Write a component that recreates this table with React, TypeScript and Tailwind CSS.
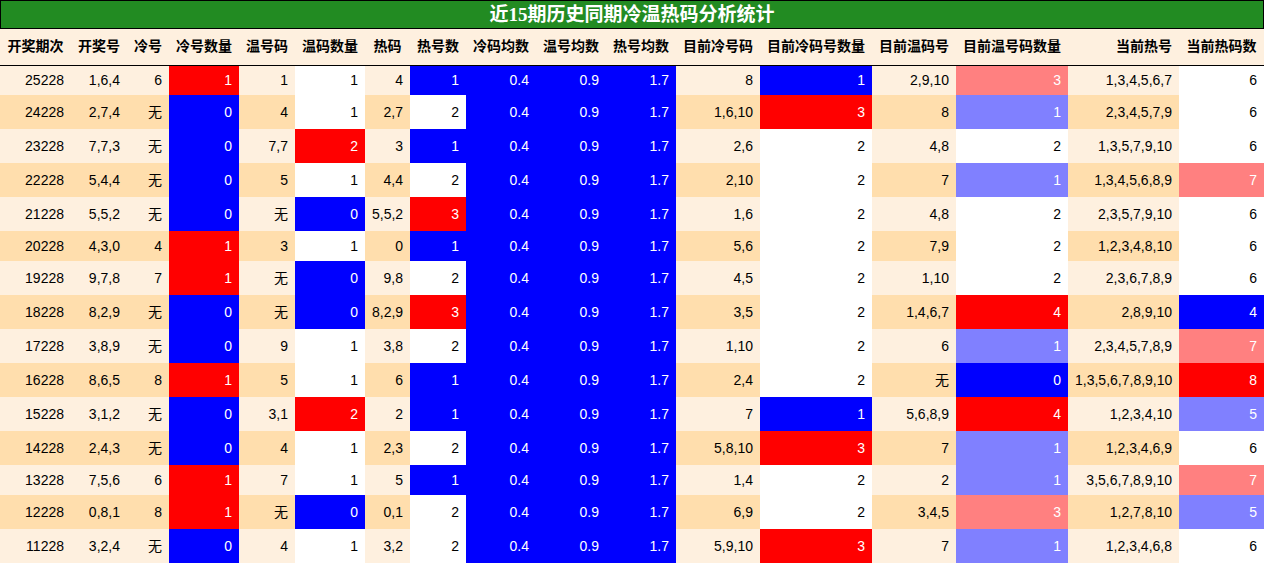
import React from 'react';

type Tone = 'blue' | 'lblue' | 'white' | 'lred' | 'red';

const TONE_CLASS: Record<Tone, string> = {
    blue: 'bg-[#0000ff] text-white',
    lblue: 'bg-[#8080ff] text-white',
    white: 'bg-white text-black',
    lred: 'bg-[#ff8080] text-white',
    red: 'bg-[#ff0000] text-white',
};

// count -> tone, per column
const COLD_CNT: Record<string, Tone> = { '0': 'blue', '1': 'red' };
const WARM_CNT: Record<string, Tone> = { '0': 'blue', '1': 'white', '2': 'red' };
const HOT_CNT: Record<string, Tone> = { '1': 'blue', '2': 'white', '3': 'red' };
const CUR_COLD_CNT: Record<string, Tone> = { '1': 'blue', '2': 'white', '3': 'red' };
const CUR_WARM_CNT: Record<string, Tone> = { '0': 'blue', '1': 'lblue', '2': 'white', '3': 'lred', '4': 'red' };
const CUR_HOT_CNT: Record<string, Tone> = { '4': 'blue', '5': 'lblue', '6': 'white', '7': 'lred', '8': 'red' };

const HEADERS = [
    '开奖期次', '开奖号', '冷号', '冷号数量', '温号码', '温码数量', '热码', '热号数',
    '冷码均数', '温号均数', '热号均数', '目前冷号码', '目前冷码号数量', '目前温码号',
    '目前温号码数量', '当前热号', '当前热码数',
];

const WIDTHS = [
    'w-[71px]', 'w-[56px]', 'w-[42px]', 'w-[70px]', 'w-[56px]', 'w-[70px]', 'w-[45px]', 'w-[56px]',
    'w-[70px]', 'w-[70px]', 'w-[70px]', 'w-[84px]', 'w-[112px]', 'w-[84px]', 'w-[112px]', 'w-[111px]', 'w-[85px]',
];

// 期次, 开奖号, 冷号, 冷号数量, 温号码, 温码数量, 热码, 热号数, 目前冷号码, 目前冷码号数量, 目前温码号, 目前温号码数量, 当前热号, 当前热码数
const ROWS: string[][] = [
    ['25228', '1,6,4', '6', '1', '1', '1', '4', '1', '8', '1', '2,9,10', '3', '1,3,4,5,6,7', '6'],
    ['24228', '2,7,4', '无', '0', '4', '1', '2,7', '2', '1,6,10', '3', '8', '1', '2,3,4,5,7,9', '6'],
    ['23228', '7,7,3', '无', '0', '7,7', '2', '3', '1', '2,6', '2', '4,8', '2', '1,3,5,7,9,10', '6'],
    ['22228', '5,4,4', '无', '0', '5', '1', '4,4', '2', '2,10', '2', '7', '1', '1,3,4,5,6,8,9', '7'],
    ['21228', '5,5,2', '无', '0', '无', '0', '5,5,2', '3', '1,6', '2', '4,8', '2', '2,3,5,7,9,10', '6'],
    ['20228', '4,3,0', '4', '1', '3', '1', '0', '1', '5,6', '2', '7,9', '2', '1,2,3,4,8,10', '6'],
    ['19228', '9,7,8', '7', '1', '无', '0', '9,8', '2', '4,5', '2', '1,10', '2', '2,3,6,7,8,9', '6'],
    ['18228', '8,2,9', '无', '0', '无', '0', '8,2,9', '3', '3,5', '2', '1,4,6,7', '4', '2,8,9,10', '4'],
    ['17228', '3,8,9', '无', '0', '9', '1', '3,8', '2', '1,10', '2', '6', '1', '2,3,4,5,7,8,9', '7'],
    ['16228', '8,6,5', '8', '1', '5', '1', '6', '1', '2,4', '2', '无', '0', '1,3,5,6,7,8,9,10', '8'],
    ['15228', '3,1,2', '无', '0', '3,1', '2', '2', '1', '7', '1', '5,6,8,9', '4', '1,2,3,4,10', '5'],
    ['14228', '2,4,3', '无', '0', '4', '1', '2,3', '2', '5,8,10', '3', '7', '1', '1,2,3,4,6,9', '6'],
    ['13228', '7,5,6', '6', '1', '7', '1', '5', '1', '1,4', '2', '2', '1', '3,5,6,7,8,9,10', '7'],
    ['12228', '0,8,1', '8', '1', '无', '0', '0,1', '2', '6,9', '2', '3,4,5', '3', '1,2,7,8,10', '5'],
    ['11228', '3,2,4', '无', '0', '4', '1', '3,2', '2', '5,9,10', '3', '7', '1', '1,2,3,4,6,8', '6'],
];

const Plain = ({ v }: { v: string }) => <td className="px-[7px] text-right">{v}</td>;

const Toned = ({ v, tone }: { v: string; tone: Tone }) => (
    <td className={`px-[7px] text-right ${TONE_CLASS[tone]}`}>{v}</td>
);

export default function App() {
    return (
        <div className="w-[1264px] h-[564px] bg-white font-['Liberation_Sans','Noto_Sans_CJK_SC',sans-serif] text-[14px] text-black">
            {/* Title */}
            <div className="h-[29px] border border-black bg-[#228b22] flex items-center justify-center">
                <span className="text-white font-bold text-[19px] leading-none font-['Liberation_Serif','Noto_Sans_CJK_SC',serif]">
                    近15期历史同期冷温热码分析统计
                </span>
            </div>

            <table className="table-fixed border-collapse w-[1264px]">
                <colgroup>
                    {WIDTHS.map((w, i) => <col key={i} className={w} />)}
                </colgroup>
                <thead>
                    <tr className="h-[36px] bg-[#fef0df] border-b border-black">
                        {HEADERS.map((h, i) => (
                            <th key={h} className={`px-[7px] font-bold whitespace-nowrap ${i === 15 ? 'text-right' : 'text-center'}`}>
                                {h}
                            </th>
                        ))}
                    </tr>
                </thead>
                <tbody>
                    {ROWS.map((r, idx) => {
                        const tall = r.includes('无');
                        const rowBg = idx % 2 === 0 ? 'bg-[#fef0df]' : 'bg-[#ffdead]';
                        return (
                            <tr key={r[0]} className={`${rowBg} ${tall ? 'h-[34px]' : 'h-[30px]'} leading-none`}>
                                <Plain v={r[0]} />
                                <Plain v={r[1]} />
                                <Plain v={r[2]} />
                                <Toned v={r[3]} tone={COLD_CNT[r[3]]} />
                                <Plain v={r[4]} />
                                <Toned v={r[5]} tone={WARM_CNT[r[5]]} />
                                <Plain v={r[6]} />
                                <Toned v={r[7]} tone={HOT_CNT[r[7]]} />
                                <Toned v="0.4" tone="blue" />
                                <Toned v="0.9" tone="blue" />
                                <Toned v="1.7" tone="blue" />
                                <Plain v={r[8]} />
                                <Toned v={r[9]} tone={CUR_COLD_CNT[r[9]]} />
                                <Plain v={r[10]} />
                                <Toned v={r[11]} tone={CUR_WARM_CNT[r[11]]} />
                                <Plain v={r[12]} />
                                <Toned v={r[13]} tone={CUR_HOT_CNT[r[13]]} />
                            </tr>
                        );
                    })}
                </tbody>
            </table>
        </div>
    );
}
